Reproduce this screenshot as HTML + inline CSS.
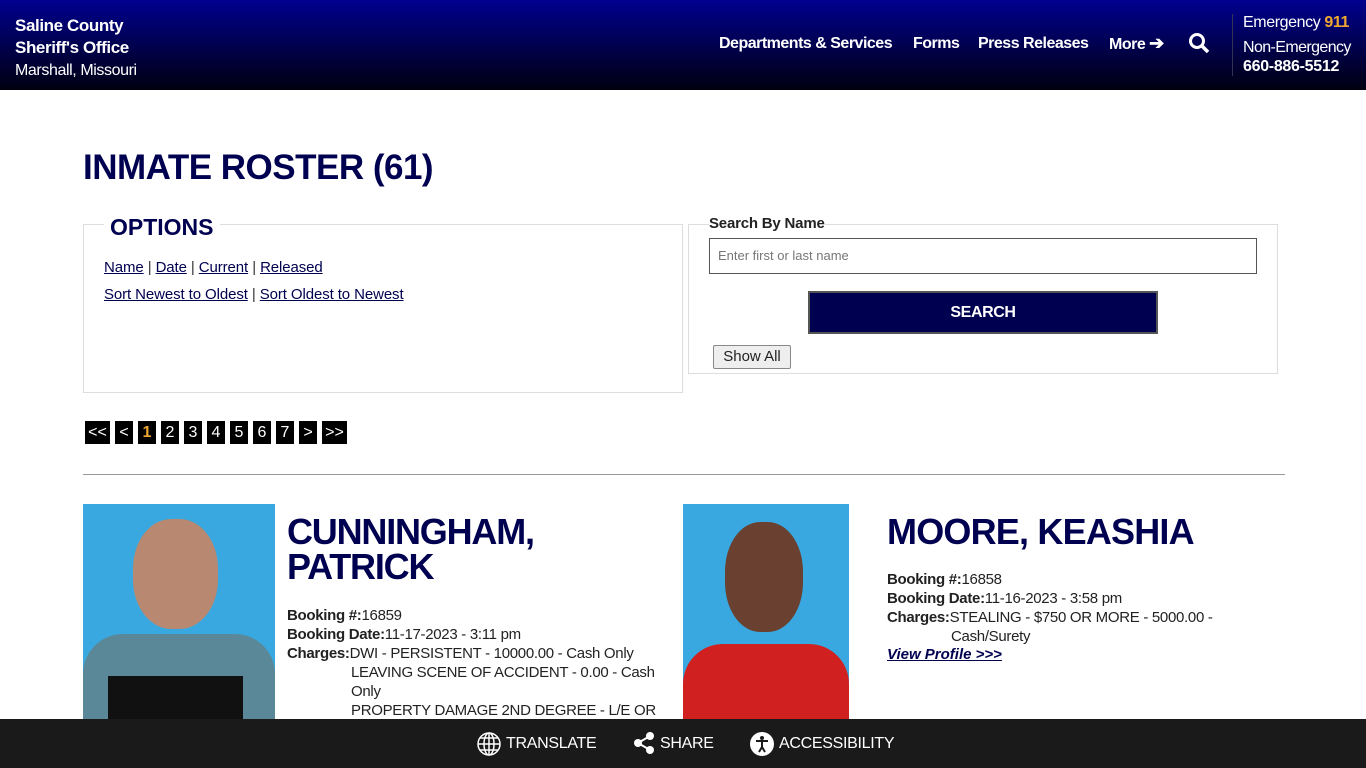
<!DOCTYPE html>
<html><head><style>
*{box-sizing:border-box;margin:0;padding:0}
body{width:1366px;height:768px;overflow:hidden;font-family:"Liberation Sans",sans-serif;background:#fff;position:relative;color:#222}
.hdr{position:absolute;left:0;top:0;width:1366px;height:90px;background:linear-gradient(#00008f,#000010);color:#fff}
.a{position:absolute;white-space:nowrap}
a{color:#000050;text-decoration:underline}
.pg{position:absolute;top:421px;height:23px;background:#000;color:#fff;font-size:16px;text-align:center;line-height:23px}
h2{font-size:36px;color:#000050;font-weight:bold;line-height:35px;letter-spacing:-1.2px}
.info{font-size:15px;line-height:19px;letter-spacing:-0.3px}
.nav{font-size:16px;font-weight:bold;letter-spacing:-0.5px;top:35px}
.foot{position:absolute;left:0;top:719px;width:1366px;height:49px;background:#1a1a1a;color:#fff;font-size:16px;letter-spacing:-0.3px}
</style></head><body>
<div class="hdr">
<div class="a" style="left:15px;top:15px;font-size:17px;font-weight:bold;line-height:22px;letter-spacing:-0.4px">Saline County<br>Sheriff's Office<br><span style="font-weight:normal;font-size:16px">Marshall, Missouri</span></div>
<div class="a nav" style="left:719px">Departments &amp; Services</div>
<div class="a nav" style="left:913px">Forms</div>
<div class="a nav" style="left:978px">Press Releases</div>
<div class="a nav" style="left:1109px;top:33px">More <span style="font-size:18px">➔</span></div>
<svg class="a" style="left:1188px;top:32px" width="22" height="22" viewBox="0 0 22 22"><circle cx="9" cy="9" r="6.5" stroke="#fff" stroke-width="3" fill="none"/><line x1="14" y1="14" x2="20" y2="20" stroke="#fff" stroke-width="3.5"/></svg>
<div class="a" style="left:1232px;top:14px;width:1px;height:62px;background:#335"></div>
<div class="a" style="left:1243px;top:14px;font-size:16px;letter-spacing:-0.4px">Emergency <b style="color:#f0a830">911</b></div>
<div class="a" style="left:1243px;top:39px;font-size:16px;letter-spacing:-0.6px">Non-Emergency</div>
<div class="a" style="left:1243px;top:58px;font-size:16px;font-weight:bold;letter-spacing:-0.3px">660-886-5512</div>
</div>
<div class="a" style="left:83px;top:148px;font-size:35px;font-weight:bold;color:#000050;letter-spacing:-0.5px">INMATE ROSTER (61)</div>
<div class="a" style="left:83px;top:224px;width:600px;height:169px;border:1px solid #ddd"></div>
<div class="a" style="left:104px;top:214px;font-size:23px;font-weight:bold;color:#000050;background:#fff;padding:0 6px">OPTIONS</div>
<div class="a" style="left:104px;top:254px;font-size:15px;line-height:27px;color:#333;letter-spacing:-0.1px"><a>Name</a> | <a>Date</a> | <a>Current</a> | <a>Released</a><br><a>Sort Newest to Oldest</a> | <a>Sort Oldest to Newest</a></div>
<div class="a" style="left:688px;top:224px;width:590px;height:150px;border:1px solid #ddd"></div>
<div class="a" style="left:709px;top:215px;font-size:15px;font-weight:bold;background:#fff;letter-spacing:-0.2px">Search By Name</div>
<div class="a" style="left:709px;top:238px;width:548px;height:36px;border:1px solid #555;font-size:13px;color:#777;padding:9px 8px">Enter first or last name</div>
<div class="a" style="left:808px;top:291px;width:350px;height:43px;background:#000050;border:2px solid #555;color:#fff;font-weight:bold;font-size:16px;text-align:center;line-height:39px;letter-spacing:-0.4px">SEARCH</div>
<div class="a" style="left:713px;top:345px;width:78px;height:24px;background:#eee;border:1px solid #888;border-radius:2px;font-size:15px;text-align:center;line-height:22px">Show All</div>
<div class="pg" style="left:85px;width:25px">&lt;&lt;</div>
<div class="pg" style="left:115px;width:18px">&lt;</div>
<div class="pg" style="left:138px;width:18px;color:#f0a830;font-weight:bold">1</div>
<div class="pg" style="left:161px;width:18px">2</div>
<div class="pg" style="left:184px;width:18px">3</div>
<div class="pg" style="left:207px;width:18px">4</div>
<div class="pg" style="left:230px;width:18px">5</div>
<div class="pg" style="left:253px;width:18px">6</div>
<div class="pg" style="left:276px;width:18px">7</div>
<div class="pg" style="left:299px;width:18px">&gt;</div>
<div class="pg" style="left:322px;width:25px">&gt;&gt;</div>
<div class="a" style="left:83px;top:474px;width:1202px;height:1px;background:#999"></div>
<div class="a" style="left:83px;top:504px;width:192px;height:215px;background:#3aa8e0;overflow:hidden"><div style="position:absolute;left:50px;top:15px;width:85px;height:110px;border-radius:45%;background:#b88870"></div><div style="position:absolute;left:0;top:130px;width:192px;height:90px;background:#5a8898;border-radius:40px 40px 0 0"></div><div style="position:absolute;left:25px;top:172px;width:135px;height:45px;background:#111"></div></div>
<div class="a" style="left:287px;top:514px"><h2>CUNNINGHAM,<br>PATRICK</h2></div>
<div class="a info" style="left:287px;top:606px"><b>Booking #:</b>16859<br><b>Booking Date:</b>11-17-2023 - 3:11 pm<br><b>Charges:</b>DWI - PERSISTENT - 10000.00 - Cash Only</div>
<div class="a info" style="left:351px;top:663px">LEAVING SCENE OF ACCIDENT - 0.00 - Cash<br>Only<br>PROPERTY DAMAGE 2ND DEGREE - L/E OR</div>
<div class="a" style="left:683px;top:504px;width:166px;height:215px;background:#3aa8e0;overflow:hidden"><div style="position:absolute;left:42px;top:18px;width:78px;height:110px;border-radius:45%;background:#6a4030"></div><div style="position:absolute;left:0;top:140px;width:166px;height:80px;background:#d02020;border-radius:40px 40px 0 0"></div></div>
<div class="a" style="left:887px;top:514px"><h2 style="letter-spacing:-0.8px">MOORE, KEASHIA</h2></div>
<div class="a info" style="left:887px;top:570px"><b>Booking #:</b>16858<br><b>Booking Date:</b>11-16-2023 - 3:58 pm<br><b>Charges:</b>STEALING - $750 OR MORE - 5000.00 -</div>
<div class="a info" style="left:951px;top:627px">Cash/Surety</div>
<div class="a" style="left:887px;top:646px;font-size:15px;font-weight:bold;font-style:italic"><a>View Profile &gt;&gt;&gt;</a></div>
<div class="foot">
<svg class="a" style="left:477px;top:13px" width="24" height="24" viewBox="0 0 24 24" fill="none" stroke="#fff" stroke-width="1.5"><circle cx="12" cy="12" r="11"/><ellipse cx="12" cy="12" rx="5" ry="11"/><path d="M1 12h22M3 6h18M3 18h18M12 1v22"/></svg>
<div class="a" style="left:506px;top:16px">TRANSLATE</div>
<svg class="a" style="left:632px;top:12px" width="24" height="24"><circle cx="18" cy="5" r="4" fill="#fff"/><circle cx="6" cy="12" r="4" fill="#fff"/><circle cx="18" cy="19" r="4" fill="#fff"/><path d="M18 5L6 12L18 19" stroke="#fff" stroke-width="2" fill="none"/></svg>
<div class="a" style="left:660px;top:16px">SHARE</div>
<svg class="a" style="left:750px;top:13px" width="24" height="24" viewBox="0 0 24 24"><circle cx="12" cy="12" r="12" fill="#fff"/><circle cx="12" cy="6" r="2" fill="#1a1a1a"/><path d="M6 9h12M12 9v6M12 15l-3 5M12 15l3 5" stroke="#1a1a1a" stroke-width="2" fill="none"/></svg>
<div class="a" style="left:779px;top:16px">ACCESSIBILITY</div>
</div>
</body></html>
